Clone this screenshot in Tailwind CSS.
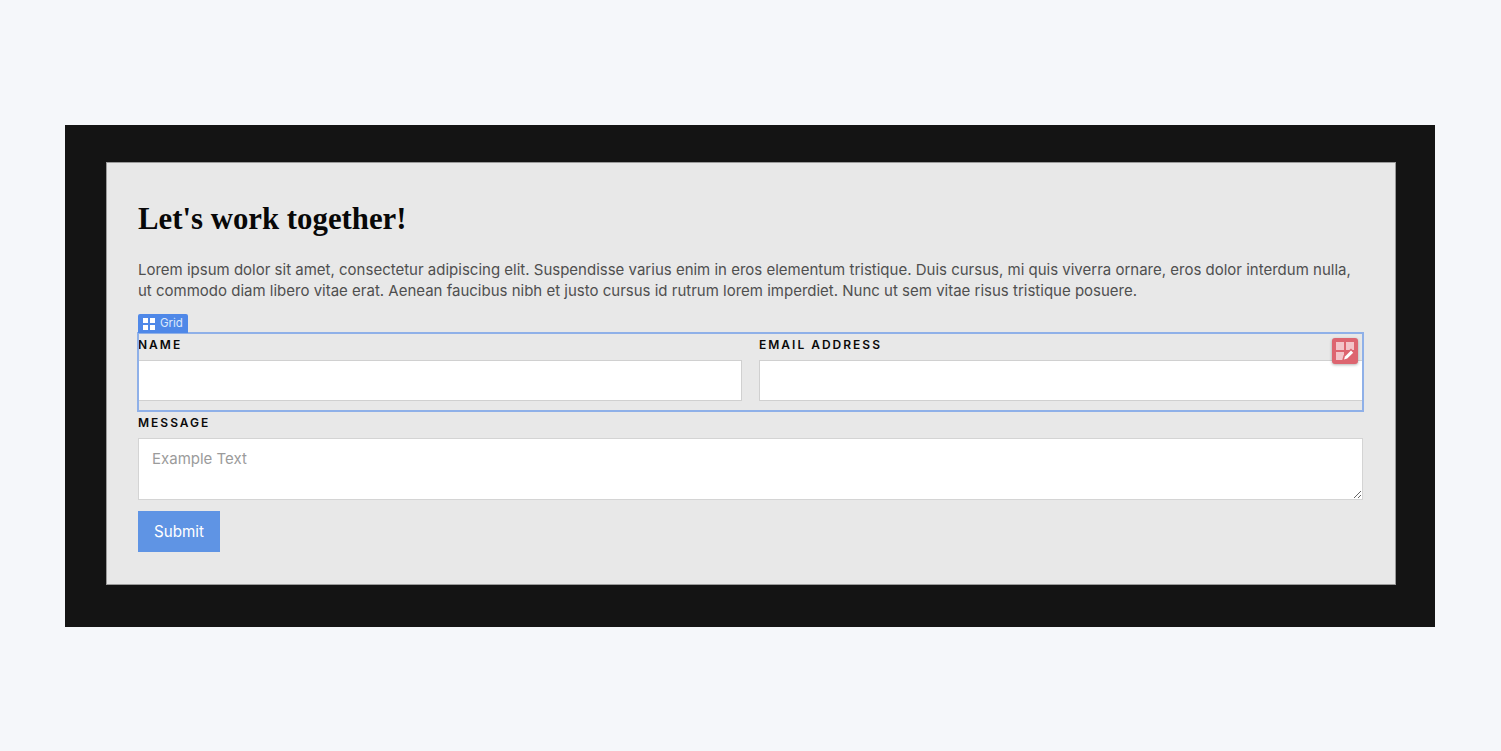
<!doctype html>
<html lang="en">
<head>
<meta charset="utf-8">
<title>Let's work together</title>
<script src="https://cdn.jsdelivr.net/npm/@tailwindcss/browser@4"></script>
</head>
<body class="m-0 h-[751px] w-[1501px] overflow-hidden bg-[#f5f7fa] font-['Inter',sans-serif]">
<div class="px-[65px] pt-[125px]">
  <div class="h-[502px] w-[1370px] bg-[#141414] px-[41px] pt-[37px]">
    <form class="h-[423px] w-[1290px] border border-[#9a9a9a] bg-[#e8e8e8] px-[31px]">
      <h1 class="mt-[36px] font-['Liberation_Serif',serif] text-[30.8px] leading-[40px] font-bold text-[#080808]">Let's work together!</h1>
      <p class="mt-[19.5px] h-[42px] w-[1226px] text-[15px] leading-[21px] text-[#4f4f4f]">Lorem ipsum dolor sit amet, consectetur adipiscing elit. Suspendisse varius enim in eros elementum tristique. Duis cursus, mi quis viverra ornare, eros dolor interdum nulla, ut commodo diam libero vitae erat. Aenean faucibus nibh et justo cursus id rutrum lorem imperdiet. Nunc ut sem vitae risus tristique posuere.</p>
      <div class="relative mt-[32.5px] grid h-[78px] w-[1225px] grid-cols-[604px_604px] gap-x-[17px] outline-2 -outline-offset-1 outline-[#8fb0e8]">
        <div class="absolute -top-[19px] left-0 flex h-[19px] w-[50px] items-center gap-[5px] rounded-t-[2px] bg-[#4f88e8] pl-[5px] text-[11.5px] text-[#dce8fb]">
          <svg width="12" height="12" viewBox="0 0 12 12" fill="#fff" aria-hidden="true"><rect x="0" y="0" width="5" height="5"/><rect x="7" y="0" width="5" height="5"/><rect x="0" y="7" width="5" height="5"/><rect x="7" y="7" width="5" height="5"/></svg>
          <span>Grid</span>
        </div>
        <label class="block">
          <span class="block h-[27px] pt-[4px] text-[12px] leading-[15px] font-semibold tracking-[2px] text-[#0a0a0a]">NAME</span>
          <input type="text" aria-label="Name" class="block h-[41px] w-full border border-[#d0d0d0] bg-white">
        </label>
        <label class="block">
          <span class="block h-[27px] pt-[4px] text-[12px] leading-[15px] font-semibold tracking-[2px] text-[#0a0a0a]">EMAIL ADDRESS</span>
          <input type="email" aria-label="Email address" class="block h-[41px] w-full border border-[#d0d0d0] bg-white">
        </label>
        <div class="absolute top-[5px] right-[5px] flex h-[26px] w-[26px] items-center justify-center rounded-[3px] bg-[#dd6570] shadow-[0_1px_3px_rgba(0,0,0,0.3)]">
          <svg width="18" height="18" viewBox="0 0 18 18" aria-hidden="true">
            <rect x="0" y="0" width="8" height="8" fill="#f3c4c9"/>
            <rect x="10" y="0" width="8" height="8" fill="#f3c4c9"/>
            <rect x="0" y="10" width="8" height="8" fill="#f3c4c9"/>
            <path d="M6 19 L7.5 13.5 L15 6.5 L19 10.5 L12 18 Z" fill="#dd6570"/>
            <path d="M8 17.5 L9 14.5 L15 8.5 L17.2 10.7 L11.2 16.6 Z" fill="#fff"/>
          </svg>
        </div>
      </div>
      <label class="block">
        <span class="block h-[27px] pt-[4px] text-[12px] leading-[15px] font-semibold tracking-[2px] text-[#0a0a0a]">MESSAGE</span>
        <textarea aria-label="Message" placeholder="Example Text" class="block h-[62px] w-[1225px] resize-y border border-[#d4d4d4] bg-white px-[13px] py-[9px] text-[15px] leading-[21px] placeholder:text-[#9b9b9b]"></textarea>
      </label>
      <button type="button" class="mt-[11px] block h-[41px] w-[82px] bg-[#5f94e4] pt-[2px] text-center text-[15.2px] text-white">Submit</button>
    </form>
  </div>
</div>
</body>
</html>
